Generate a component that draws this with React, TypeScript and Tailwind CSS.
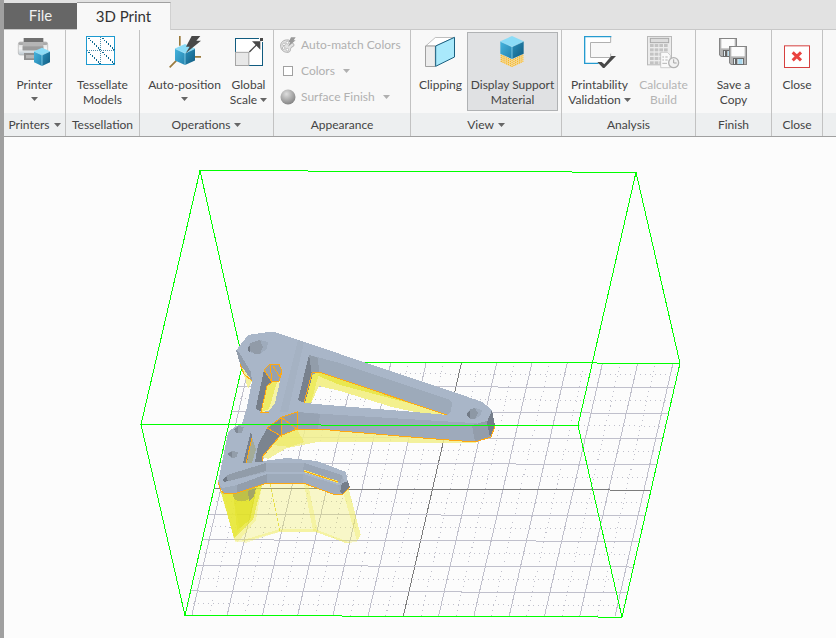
import { useId } from "react";
import type { ReactNode } from "react";

const cubeTop = "#8bdcf7";

function Caret({ muted = false }: { muted?: boolean }) {
  return (
    <svg viewBox="0 0 7 4" className={`inline-block h-1 w-[7px] ${muted ? "text-[#b0b0b0]" : "text-[#666666]"}`} aria-hidden="true">
      <path d="M0 0H7L3.5 4Z" fill="currentColor" />
    </svg>
  );
}

function Icon({ children }: { children: ReactNode }) {
  return (
    <svg viewBox="0 0 96 102" className="h-[34px] w-8 shrink-0 overflow-visible" aria-hidden="true">
      {children}
    </svg>
  );
}

// Blue box seen from above, w wide and h high
function Cube({ x, y, w, h }: { x: number; y: number; w: number; h: number }) {
  const id = useId();
  const cx = x + w / 2;
  const d = w * 0.23;
  return (
    <g>
      <linearGradient id={id + "l"} x1="0" y1="0" x2="1" y2="1">
        <stop offset="0" stopColor="#45b4de" />
        <stop offset="1" stopColor="#2583ae" />
      </linearGradient>
      <linearGradient id={id + "r"} x1="0" y1="0" x2="1" y2="1">
        <stop offset="0" stopColor="#2b90bb" />
        <stop offset="1" stopColor="#115b80" />
      </linearGradient>
      <path d={`M${cx} ${y}L${x + w} ${y + d}L${cx} ${y + 2 * d}L${x} ${y + d}Z`} fill={cubeTop} />
      <path d={`M${x} ${y + d}L${cx} ${y + 2 * d}V${y + h}L${x} ${y + h - d}Z`} fill={`url(#${id}l)`} />
      <path d={`M${x + w} ${y + d}L${cx} ${y + 2 * d}V${y + h}L${x + w} ${y + h - d}Z`} fill={`url(#${id}r)`} />
      <path d={`M${x} ${y + d}L${cx} ${y + 2 * d}L${x + w} ${y + d}M${cx} ${y + 2 * d}V${y + h}`} fill="none" stroke="#a5e6fa" strokeWidth="2" />
    </g>
  );
}

function PrinterIcon() {
  const id = useId();
  return (
    <Icon>
      <linearGradient id={id} x1="0" y1="0" x2="0" y2="1">
        <stop offset="0" stopColor="#d8d8d8" />
        <stop offset="0.5" stopColor="#f4f4f4" />
        <stop offset="1" stopColor="#bcc8d0" />
      </linearGradient>
      <g transform="translate(-3 0)">
        <rect x="1" y="21" width="88" height="39" rx="6" fill={`url(#${id})`} stroke="#b2b2b2" strokeWidth="2" />
        <rect x="2" y="22" width="86" height="8" rx="4" fill="#a9a9a9" />
        <rect x="17" y="9" width="59" height="13" fill="#707070" />
        <rect x="14" y="21" width="62" height="25" fill="#b5b5b5" />
        <rect x="14" y="34" width="62" height="12" fill="#9b9b9b" />
        <rect x="18" y="54" width="40" height="21" fill="#8f8f8f" />
        <rect x="24" y="60" width="30" height="10" fill="#b5b5b5" />
        <Cube x={48} y={38} w={48} h={55} />
      </g>
    </Icon>
  );
}

function TessellateIcon() {
  return (
    <Icon>
      <g transform="translate(-6 0)" shapeRendering="crispEdges">
        <rect x="5" y="4.500" width="84" height="84" fill="#fff" stroke="#1d9ad0" strokeWidth="3" />
        <path d="M7 46.500H89M47.500 6V88" stroke="#4b8ba8" strokeWidth="3" strokeDasharray="3 3" />
        <path d="M10 9L46 45M52 9L88 45M10 51L46 87M52 51L88 87" stroke="#0e6a92" strokeWidth="3" strokeDasharray="4 4" />
      </g>
    </Icon>
  );
}

function AutoPositionIcon() {
  return (
    <Icon>
      <path d="M32.500 3V32M2 97L22 77M74 65.500H96" stroke="#9a7a3c" strokeWidth="5" fill="none" />
      <Cube x={18} y={27} w={60} h={63} />
      <path d="M68 3H94L82 17H96L50 55L62 35H51Z" fill="#484848" />
    </Icon>
  );
}

function ScaleIcon() {
  return (
    <Icon>
      <rect x="7.500" y="10.500" width="81" height="81" fill="#fff" stroke="#115c80" strokeWidth="3" />
      <rect x="7.500" y="52" width="40" height="39.500" fill="#e8e8e8" stroke="#a5a5a5" strokeWidth="3" />
      <rect x="78" y="6" width="15" height="15" fill="#f8f8f8" />
      <rect x="81" y="9" width="9" height="9" fill="#484848" />
      <path d="M49 51L74 26" stroke="#484848" strokeWidth="4" />
      <path d="M57 19H82V44Z" fill="#484848" />
    </Icon>
  );
}

function ClippingIcon() {
  return (
    <Icon>
      <g transform="translate(-3 0)">
        <path d="M5 33L34 7.500H91L35 33Z" fill="#fff" stroke="#a0a0a0" strokeWidth="2" />
        <path d="M4.500 33H34V94.500H4.500Z" fill="#ececec" stroke="#a0a0a0" strokeWidth="3" />
        <path d="M35 33L91.500 7V66L35 94Z" fill="#a9e9fb" stroke="#195f80" strokeWidth="3" />
      </g>
    </Icon>
  );
}

function SupportIcon() {
  return (
    <Icon>
      <g transform="translate(-3 0)">
        <path d="M14 58V80L48 97L82 80V58L48 73Z" fill="#f4e3bd" />
        <path d="M14 60L48 76L82 60M14 66L48 82L82 66M14 72L48 88L82 72M14 78L48 94L82 78" fill="none" stroke="#f5b625" strokeWidth="4" strokeDasharray="4 2" />
        <Cube x={13} y={3} w={70} h={69} />
      </g>
    </Icon>
  );
}

function ValidationIcon() {
  return (
    <Icon>
      <path d="M1.500 4.500H80V22H19.500V67H80V84H1.500Z" fill="#fff" />
      <path d="M80 4V22.500H19.500V67.500H80V56" fill="none" stroke="#b0b0b0" strokeWidth="3" />
      <path d="M82 5H2V85H44" fill="none" stroke="#259bd0" strokeWidth="4" />
      <path d="M40 81H53L61 88L82 63H96L61 99H57Z" fill="#484848" />
    </Icon>
  );
}

function CalculatorIcon() {
  const rows = [26, 39, 52, 65, 78];
  const cols = [8, 22, 36, 50];
  return (
    <Icon>
      <g transform="translate(-3 0)">
        <rect x="1.500" y="4.500" width="72" height="85" fill="#ececec" stroke="#b9b9b9" strokeWidth="3" />
        <rect x="10" y="10" width="55" height="13" fill="#dcdcdc" stroke="#a8a8a8" strokeWidth="3" />
        {rows.map((y) => cols.map((x) => <rect key={`${x}-${y}`} x={x + 1} y={y + 1} width="11" height="9" fill="#c3c3c3" />))}
        <path d="M41 52H61L70 61V98H41Z" fill="#fafafa" stroke="#bbb" strokeWidth="2" />
        <path d="M46 66H51M55 66H62M46 75H51M55 75H62M46 85H60" stroke="#b5b5b5" strokeWidth="3" />
        <circle cx="80" cy="83" r="15" fill="#f2f2f2" stroke="#b2b2b2" strokeWidth="4" />
        <path d="M80 73V84H89" fill="none" stroke="#a5a5a5" strokeWidth="3" />
      </g>
    </Icon>
  );
}

function Floppy({ x, y }: { x: number; y: number }) {
  return (
    <g transform={`translate(${x} ${y})`}>
      <path d="M0 0H54V57H6L0 51Z" fill="#858585" />
      <path d="M3 3H51V54H7L3 50Z" fill="#b4b4b4" />
      <rect x="7" y="3" width="40" height="28" fill="#fcfcfc" />
      <rect x="12" y="36" width="33" height="21" fill="#6c6c6c" />
      <rect x="15" y="39" width="27" height="15" fill="#e4eff5" />
      <rect x="18" y="39" width="7" height="15" fill="#666" />
      <rect x="28" y="39" width="12" height="15" fill="#a9d8ee" />
    </g>
  );
}

function SaveIcon() {
  return (
    <Icon>
      <g transform="translate(-3 0)">
        <Floppy x={6} y={9} />
        <Floppy x={36} y={33} />
      </g>
    </Icon>
  );
}

function CloseIcon() {
  return (
    <Icon>
      <rect x="10.500" y="32.500" width="75" height="65" fill="#fff" stroke="#d6403f" strokeWidth="3" />
      <path d="M35 52L60 76M60 52L35 76" stroke="#ea4340" strokeWidth="9" />
    </Icon>
  );
}

function PaletteIcon() {
  return (
    <svg viewBox="0 0 48 48" className="size-4 shrink-0" aria-hidden="true">
      <path d="M26 9C10 7 1 16 2 28C3 40 13 47 24 46C34 44 30 37 33 32C36 28 43 30 42 22Z" fill="#e2e2e2" stroke="#b0b0b0" strokeWidth="3" />
      <g fill="#fff" stroke="#a5a5a5" strokeWidth="2">
        <circle cx="12" cy="22" r="4" />
        <circle cx="11" cy="33" r="4" />
        <circle cx="22" cy="38" r="4" />
        <circle cx="22" cy="17" r="4" />
      </g>
      <path d="M33 1H47L41 10H47L24 29L31 15H26Z" fill="#999" />
    </svg>
  );
}

function SwatchIcon() {
  return (
    <svg viewBox="0 0 16 16" className="size-4 shrink-0" aria-hidden="true">
      <rect x="3.500" y="3.500" width="9" height="9" fill="#fff" stroke="#a0a0a0" />
    </svg>
  );
}

function SphereIcon() {
  return (
    <svg viewBox="0 0 16 16" className="size-4 shrink-0" aria-hidden="true">
      <radialGradient id="sphere" cx="0.4" cy="0.3" r="0.7">
        <stop offset="0" stopColor="#dedede" />
        <stop offset="0.6" stopColor="#a9a9a9" />
        <stop offset="1" stopColor="#858585" />
      </radialGradient>
      <circle cx="8" cy="8" r="7.500" fill="url(#sphere)" />
    </svg>
  );
}

type ToolProps = {
  icon: ReactNode;
  lines: string[];
  caret?: "below" | "inline";
  width: string;
  active?: boolean;
  disabled?: boolean;
};

function Tool({ icon, lines, caret, width, active, disabled }: ToolProps) {
  return (
    <button
      type="button"
      disabled={disabled}
      aria-pressed={active}
      className={`flex h-[79px] shrink-0 flex-col items-center border pt-[2px] leading-[15px] whitespace-nowrap ${width} ${
        active ? "border-[#b0b2b4] bg-[#e0e1e3]" : "border-transparent"
      } ${disabled ? "text-[#b4b4b4]" : "text-[#444444]"}`}
    >
      {icon}
      <span className="mt-2 flex flex-col items-center">
        {lines.map((line, i) => (
          <span key={line} className="flex items-center gap-[3px]">
            {line}
            {caret === "inline" && i === lines.length - 1 && <Caret />}
          </span>
        ))}
        {caret === "below" && (
          <span className="flex h-[14px] items-center">
            <Caret />
          </span>
        )}
      </span>
    </button>
  );
}

function SmallTool({ icon, label, caret }: { icon: ReactNode; label: string; caret?: boolean }) {
  return (
    <button type="button" disabled className="flex h-[26px] items-center gap-[5px] whitespace-nowrap text-[#b0b0b0]">
      {icon}
      {label}
      {caret && (
        <span className="ml-[3px] flex">
          <Caret muted />
        </span>
      )}
    </button>
  );
}

type GroupProps = { title: string; width: string; menu?: boolean; children: ReactNode };

function Group({ title, width, menu, children }: GroupProps) {
  return (
    <section className={`flex shrink-0 flex-col border-r border-[#c2c2c2] ${width}`}>
      <div className="flex h-[83px] justify-center pt-[2px]">{children}</div>
      <h2 className="flex h-[23px] items-center justify-center gap-1 bg-[#edeff0] whitespace-nowrap text-[#444444]">
        {title}
        {menu && <Caret />}
      </h2>
    </section>
  );
}

function Ribbon() {
  return (
    <div className="flex overflow-hidden border-b border-[#a0a0a0] bg-[#f8f8f8] text-xs">
      <Group title="Printers" width="w-[62px]" menu>
        <Tool icon={<PrinterIcon />} lines={["Printer"]} caret="below" width="w-14" />
      </Group>
      <Group title="Tessellation" width="w-[74px]">
        <Tool icon={<TessellateIcon />} lines={["Tessellate", "Models"]} width="w-16" />
      </Group>
      <Group title="Operations" width="w-[134px]" menu>
        <Tool icon={<AutoPositionIcon />} lines={["Auto-position"]} caret="below" width="w-[84px]" />
        <Tool icon={<ScaleIcon />} lines={["Global", "Scale"]} caret="inline" width="w-[44px]" />
      </Group>
      <Group title="Appearance" width="w-[137px]">
        <div className="flex w-full flex-col pl-[6px]">
          <SmallTool icon={<PaletteIcon />} label="Auto-match Colors" />
          <SmallTool icon={<SwatchIcon />} label="Colors" caret />
          <SmallTool icon={<SphereIcon />} label="Surface Finish" caret />
        </div>
      </Group>
      <Group title="View" width="w-[151px]" menu>
        <Tool icon={<ClippingIcon />} lines={["Clipping"]} width="w-[53px]" />
        <Tool icon={<SupportIcon />} lines={["Display Support", "Material"]} width="w-[91px]" active />
      </Group>
      <Group title="Analysis" width="w-[134px]">
        <Tool icon={<ValidationIcon />} lines={["Printability", "Validation"]} caret="inline" width="w-[70px]" />
        <Tool icon={<CalculatorIcon />} lines={["Calculate", "Build"]} width="w-[58px]" disabled />
      </Group>
      <Group title="Finish" width="w-[76px]">
        <Tool icon={<SaveIcon />} lines={["Save a", "Copy"]} width="w-16" />
      </Group>
      <Group title="Close" width="w-[51px]">
        <Tool icon={<CloseIcon />} lines={["Close"]} width="w-11" />
      </Group>
      <div className="flex flex-1 flex-col justify-end">
        <div className="h-[23px] bg-[#edeff0]" />
      </div>
    </div>
  );
}

// x of the build plate's left edge at height y
const plateLeft = (y: number) => 185 + (615 - y) * 0.2292;

function BuildPlate() {
  const cols = Array.from({ length: 25 }, (_, i) => i);
  const rows = Array.from({ length: 19 }, (_, i) => i);
  return (
    <g fill="none" strokeWidth="1">
      {cols.map((i) => {
        const x = 191.7 + i * 17.64;
        const dark = i === 12;
        return (
          <path
            key={i}
            d={`M${x} 616L${x + 58} 363`}
            stroke={dark ? "#7c7c7c" : "#c0c0cc"}
            strokeDasharray={i % 2 ? "1 4" : undefined}
          />
        );
      })}
      {rows.map((i) => {
        const y = 373.2 + i * 12.81;
        const x = plateLeft(y);
        const dark = i === 9;
        return (
          <path
            key={i}
            d={`M${x} ${y}L${x + 437} ${y + 1.68}`}
            stroke={dark ? "#7c7c7c" : "#c0c0cc"}
            strokeDasharray={i % 2 ? undefined : "1 4"}
          />
        );
      })}
    </g>
  );
}

function SupportMaterial() {
  return (
    <g>
      <g fill="#f0ec50" fillOpacity="0.3">
        <path d="M220 490L235 541.700L246.700 542.700L280 531.700H315L346.700 543.300L356.700 541.700L360.700 535L348.300 487L303 480H266Z" />
        <path d="M343 492L357 541L360.700 535L348.300 487Z" />
        <path d="M304 484L313 531L318 532L308 484Z" />
        <path d="M280 531.700H315L346.700 543.300H352L315 529H280L240 541H246Z" />
        <path d="M262 485L256 520L238 542L234 540L224 492Z" />
      </g>
      <path d="M221 492L234 538L253 520L262 485Z" fill="#e4e424" fillOpacity="0.6" />
      <path d="M233 492L237 530L250 520L256 492Z" fill="#dede18" fillOpacity="0.5" />
      <path d="M221 492L234 538L240 530L232 492Z" fill="#e8e83a" fillOpacity="0.6" />
      <path d="M270 484L280 531" stroke="#e6e04a" strokeDasharray="3 2" />
      <path d="M232 492L234 499Q243 505 253 496L255 488Z" fill="#bfc048" />
      <path d="M248 491L249 501L254 496L256 488Z" fill="#a3a566" />
      <g fill="#f1ee8c" fillOpacity="0.85">
        <path d="M262 457L280 434L297 428L340 430L476 441V443L340 442L318 442L287 448L268 459Z" />
        <path d="M239 362L252 381L248 389L245 378Z" />
      </g>
      <path d="M272 445L281 434L297 429L304 442L290 447Z" fill="#ecea5c" fillOpacity="0.6" />
    </g>
  );
}

function Bracket() {
  return (
    <g>
      {/* bracket body; the evenodd holes let the plate show through */}
      <path
        fillRule="evenodd"
        fill="#a9b6c8"
        d="M236.500 350L248 335L268 332H274L298 340L340 354L393 372L457 393L482 402L492 410L495 426L491 437L475 442L423 438L340 431L320 429H297L280 436L263 457V461L287 458L317 461L346 472L348 482L350 487L343 494H333L303 483H267L237 493L223 494L218 482L222 463L228 432L235 427L242 424L247 407L252 381L240 364Z
        M309 355L298 400L305 403L340 406L415 412L447 415L340 379Z
        M273 382L280 381L275 403L269 411L260 412L267 385Z"
      />
      {/* left flank below the top hole */}
      <path d="M236 350L240 354L251 372L252 381L240 364Z" fill="#929dab" />
      {/* supports seen through the windows */}
      <path d="M273 382L280 381L275 403L269 411L261 412L267 386Z" fill="#f5f3a8" />
      <path d="M273 382L277 382L269 409L262 412L267 386Z" fill="#eeeb66" />
      <path d="M312 373L319 372L340 379L447 415L415 412L392 407L340 391L319 386L311 403H304Z" fill="#f3f08e" />
      <path d="M316 375L319 372L340 379L420 406L340 385Z" fill="#e9e750" />
      <path d="M312 373H319L311 403H305Z" fill="#edeb60" />
      {/* window walls */}
      <path d="M309 355L340 363L450 400L452 403L451 412L447 415L340 379L319 372L312 373Z" fill="#9daaba" />
      <path d="M309 355L313 359L315 366L305 403L298 400Z" fill="#78818d" />
      <path d="M309 355L318 358L319 372L312 375Z" fill="#929daa" />
      <path d="M264 370L271 374L272 383L267 386L261 411L257 410L256 407Z" fill="#767f8a" />
      <path d="M264 370L270 364H279L282 372L279 381L272 382Z" fill="#97a1ad" />
      {/* long arm */}
      <path d="M297 412L340 415L473 423L495 426L475 442L423 438L340 431L320 429H297Z" fill="#9eaabb" />
      <path d="M297 412L320 414L318 429H297Z" fill="#97a3b3" />
      <path d="M472 425L487 421L490 437L475 442Z" fill="#939dab" />
      <path d="M492 410L495 426L490 437L487 422Z" fill="#757e8b" />
      <path d="M298 340L304 342L288 412H280Z" fill="#a5b2c3" />
      {/* rounded end at the junction */}
      <path d="M267 428L282 417L297 412V429L280 436Z" fill="#939daa" />
      <path d="M267 428L280 436L263 457V462H255L258 445Z" fill="#7b848f" />
      <path d="M267 428L282 418V436Z" fill="#828b94" />
      <path d="M251 431L252 437L247 463H243L245 455Z" fill="#78818d" />
      <path d="M252 438L256 449L252 463H247Z" fill="#a3ab98" />
      {/* curved foot */}
      <path d="M218 482L222 488L237 485L267 474H303L338 485L348 482L350 487L343 494H333L303 483H267L237 493L223 494Z" fill="#9daaba" />
      <path d="M237 485L267 474V483L237 493Z" fill="#939eac" />
      <path d="M303 474L338 485L341 494H333L303 483Z" fill="#a1adbe" />
      <path d="M342 483L348 481L350 487L343 494L340 492Z" fill="#757e8b" />
      <path d="M223 479L227 475L266 463L304 463L342 475L344 480L341 483L303 472H267L229 481L224 482Z" fill="#a1adbd" />
      <path d="M223 479L227 475L266 463V471L229 481Z" fill="#919ca9" />
      <path d="M304 463L342 475L341 483L303 472Z" fill="#99a5b5" />
      <path d="M304 471L338 482" stroke="#f2ef6a" strokeWidth="2" />
      <path d="M223 479L226 476L228 481L224 482Z" fill="#707985" />
      {/* bolt holes */}
      <path d="M248 347L250 343L260 340L268 342L267 349L260 354H255L248 351Z" fill="#9eabbc" />
      <path d="M250 343L260 340L263 347L260 354H255L249 350Z" fill="#919ba8" />
      <path d="M248 347L250 346V352L248 351Z" fill="#717a86" />
      <path d="M467 413L470 409L475 408L482 410L481 415L475 419H470L467 416Z" fill="#9eabbc" />
      <path d="M470 409L475 408L478 413L475 419H470Z" fill="#8d98a5" />
      <path d="M467 413L470 410V418L467 416Z" fill="#717a86" />
      <path d="M234 429L238 426L244 427L242 433H236Z" fill="#939eab" />
      <path d="M234 429L238 427V433H236Z" fill="#7f8894" />
      <path d="M228 453L232 451L238 452L237 457L232 458L228 455Z" fill="#939eab" />
      <path d="M228 453L232 452V457L228 455Z" fill="#7f8894" />
      {/* supported edges */}
      <g fill="none" stroke="#ffa810" strokeWidth="1">
        <path d="M240 364L244 374L252 381" />
        <path d="M264 370L270 364H279L282 372L279 381L272 382L264 370M270 364L272 382M273 366L280 377L282 370M272 382L267 386L261 412H269" />
        <path d="M304 403L312 373L319 372L340 379L447 415" />
        <path d="M267 428L282 417L297 412V429M267 428L281 436V417L297 429" />
        <path d="M262 461V457L280 436L297 429H320L340 431L423 438L475 442L491 437L495 426" />
        <path d="M252 438L246 463" />
        <path d="M218 482L221 491L225 494L237 493L267 483H303L333 494H343L350 487" />
        <path d="M304 471L338 482" />
      </g>
    </g>
  );
}

function Viewport() {
  return (
    <svg viewBox="4 137 832 501" className="block h-auto w-full" shapeRendering="crispEdges" role="img" aria-label="Part on the build plate">
      <BuildPlate />
      <path d="M200 170.600L243 362.200L185 615.400M243 362.200L680 363.200" fill="none" stroke="#00ff00" />
      <SupportMaterial />
      <Bracket />
      <path
        d="M200 170.600L636 172.250L680 363.200L622 617.100L185 615.400L141 424.600L200 170.600M141 424.600L578 425.600L622 617.100M578 425.600L636 172.250"
        fill="none"
        stroke="#00ff00"
      />
    </svg>
  );
}

export default function App() {
  return (
    <div className="min-h-screen border-l-4 border-[#a0a0a0] bg-[#fcfcfc] font-['Lato','Open_Sans',sans-serif]">
      <header className="bg-[#e2e2e2]">
        <nav className="flex h-[30px] items-end border-b border-[#c8c8c8] text-[15px] leading-6">
          <button type="button" className="h-[26px] w-[73px] bg-[#666666] pb-[2px] text-[#f0f0f0]">
            File
          </button>
          <button type="button" className="-mb-px h-[28px] w-[94px] border-t border-r border-t-[#a0a0a0] border-r-[#d0d0d0] bg-[#f8f8f8] pb-[2px] text-[#333333]">
            3D Print
          </button>
        </nav>
        <Ribbon />
      </header>
      <main>
        <Viewport />
      </main>
    </div>
  );
}
